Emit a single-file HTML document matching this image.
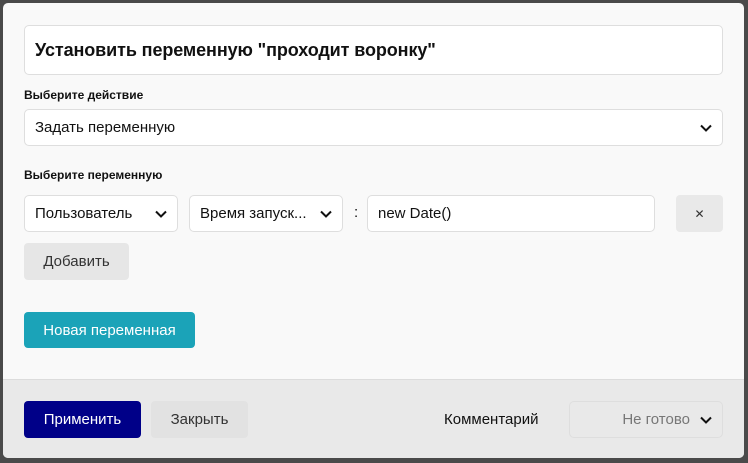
<!DOCTYPE html>
<html><head><meta charset="utf-8"><style>
*{box-sizing:border-box;margin:0;padding:0}
body{width:748px;height:463px;background:#4a4a4a;font-family:"Liberation Sans","DejaVu Sans",sans-serif;position:relative;overflow:hidden;color:#111}
.modal{position:absolute;left:3px;top:3px;width:741px;height:455px;background:#f9f9f9;border-radius:5px;overflow:hidden}
.foot{position:absolute;left:0;top:376px;width:741px;height:79px;background:#e9e9e9;border-top:1px solid #dcdcdc}
.abs{position:absolute}
.box{position:absolute;background:#fff;border:1px solid #dedede;border-radius:5px;font-size:15px;display:flex;align-items:center;padding-left:10px}
.lbl{position:absolute;font-size:12px;font-weight:bold}
.chev{position:absolute;right:10px;top:50%;margin-top:-4px}
.btn{position:absolute;border-radius:4px;font-size:15px;display:flex;align-items:center;justify-content:center}
</style></head><body>
<div class="modal">
<div class="box" style="left:21px;top:22px;width:699px;height:50px;font-size:18px;font-weight:bold;letter-spacing:-0.1px">Установить переменную "проходит воронку"</div>
<div class="lbl" style="left:21px;top:85px">Выберите действие</div>
<div class="box" style="left:21px;top:106px;width:699px;height:37px">Задать переменную<svg class="chev" width="12" height="8" viewBox="0 0 12 8"><path d="M1 1.5l5 5 5-5" fill="none" stroke="#111" stroke-width="2"/></svg></div>
<div class="lbl" style="left:21px;top:165px">Выберите переменную</div>
<div class="box" style="left:21px;top:192px;width:154px;height:37px">Пользователь<svg class="chev" width="12" height="8" viewBox="0 0 12 8"><path d="M1 1.5l5 5 5-5" fill="none" stroke="#111" stroke-width="2"/></svg></div>
<div class="box" style="left:186px;top:192px;width:154px;height:37px">Время запуск...<svg class="chev" width="12" height="8" viewBox="0 0 12 8"><path d="M1 1.5l5 5 5-5" fill="none" stroke="#111" stroke-width="2"/></svg></div>
<div class="abs" style="left:351px;top:201px;font-size:15px">:</div>
<div class="box" style="left:364px;top:192px;width:288px;height:37px">new Date()</div>
<div class="btn" style="left:673px;top:192px;width:47px;height:37px;background:#e9e9e9;font-size:12px;color:#333">✕</div>
<div class="btn" style="left:21px;top:240px;width:105px;height:37px;background:#e6e6e6;color:#333">Добавить</div>
<div class="btn" style="left:21px;top:309px;width:171px;height:36px;background:#1ba3b8;color:#fff">Новая переменная</div>
<div class="foot">
<div class="btn" style="left:21px;top:21px;width:117px;height:37px;background:#000088;color:#fff">Применить</div>
<div class="btn" style="left:148px;top:21px;width:97px;height:37px;background:#e2e2e2;color:#333">Закрыть</div>
<div class="abs" style="left:441px;top:31px;font-size:15px">Комментарий</div>
<div class="box" style="left:566px;top:21px;width:154px;height:37px;background:#e9e9e9;color:#777;justify-content:flex-end;padding-right:32px">Не готово<svg class="chev" width="12" height="8" viewBox="0 0 12 8"><path d="M1 1.5l5 5 5-5" fill="none" stroke="#111" stroke-width="2"/></svg></div>
</div>
</div>
</body></html>
